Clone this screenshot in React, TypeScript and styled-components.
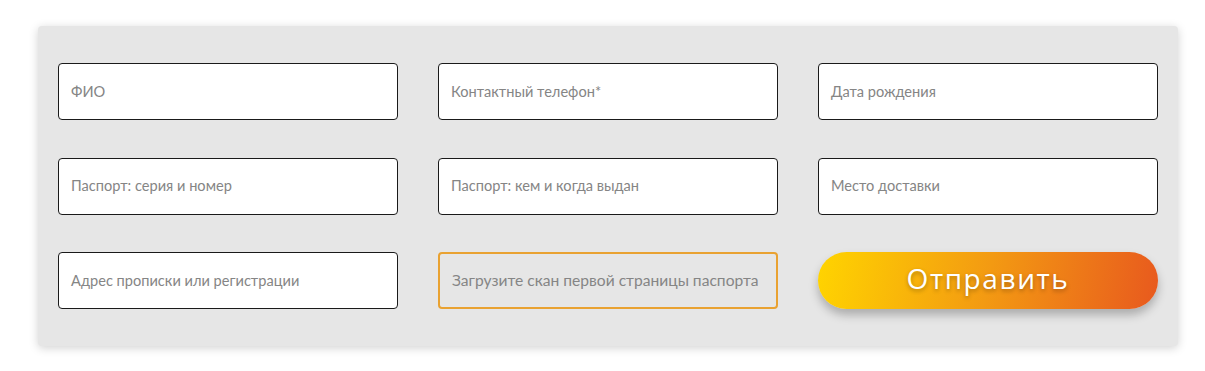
import * as React from 'react';
import styled, { createGlobalStyle } from 'styled-components';

const GlobalStyle = createGlobalStyle`
  body {
    margin: 0;
    background: #ffffff;
    font-family: Lato, "Open Sans", sans-serif;
  }
`;

const Page = styled.div`
  padding: 26px 27px 25px 38px;
`;

const FormPanel = styled.form`
  width: 1140px;
  box-sizing: border-box;
  background: #e6e6e6;
  border-radius: 4px;
  box-shadow: 0 2px 10px rgba(0, 0, 0, 0.18);
  padding: 37px 20px 37px 20px;
  display: grid;
  grid-template-columns: repeat(3, 340px);
  column-gap: 40px;
  row-gap: 37.5px;
`;

const Field = styled.div<{ $upload?: boolean }>`
  height: 57px;
  box-sizing: border-box;
  border: ${(p) => (p.$upload ? '2px solid #e9a232' : '1px solid #1a1a1a')};
  border-radius: 4px;
  background: ${(p) => (p.$upload ? 'transparent' : '#ffffff')};
  display: flex;
  align-items: center;
  padding: 0 0 1px 12px;
  font-size: ${(p) => (p.$upload ? '15.6px' : '14.6px')};
  color: #858585;
  cursor: text;
`;

const SubmitButton = styled.button`
  height: 57px;
  border: none;
  border-radius: 29px;
  background: linear-gradient(100deg, #ffd400 0%, #f39a12 50%, #e8591e 100%);
  box-shadow: 0 6px 10px rgba(0, 0, 0, 0.25);
  color: #ffffff;
  font-family: "Open Sans", Lato, sans-serif;
  font-size: 28px;
  letter-spacing: 1.6px;
  text-shadow: 0 2px 4px rgba(0, 0, 0, 0.3);
  cursor: pointer;
  padding: 0 0 5px;
`;

const fields = [
  'ФИО',
  'Контактный телефон*',
  'Дата рождения',
  'Паспорт: серия и номер',
  'Паспорт: кем и когда выдан',
  'Место доставки',
  'Адрес прописки или регистрации',
];

export default function App() {
  return (
    <Page>
      <GlobalStyle />
      <FormPanel onSubmit={(e) => e.preventDefault()}>
        {fields.map((f) => (
          <Field key={f}>{f}</Field>
        ))}
        <Field $upload>Загрузите скан первой страницы паспорта</Field>
        <SubmitButton type="submit">Отправить</SubmitButton>
      </FormPanel>
    </Page>
  );
}
